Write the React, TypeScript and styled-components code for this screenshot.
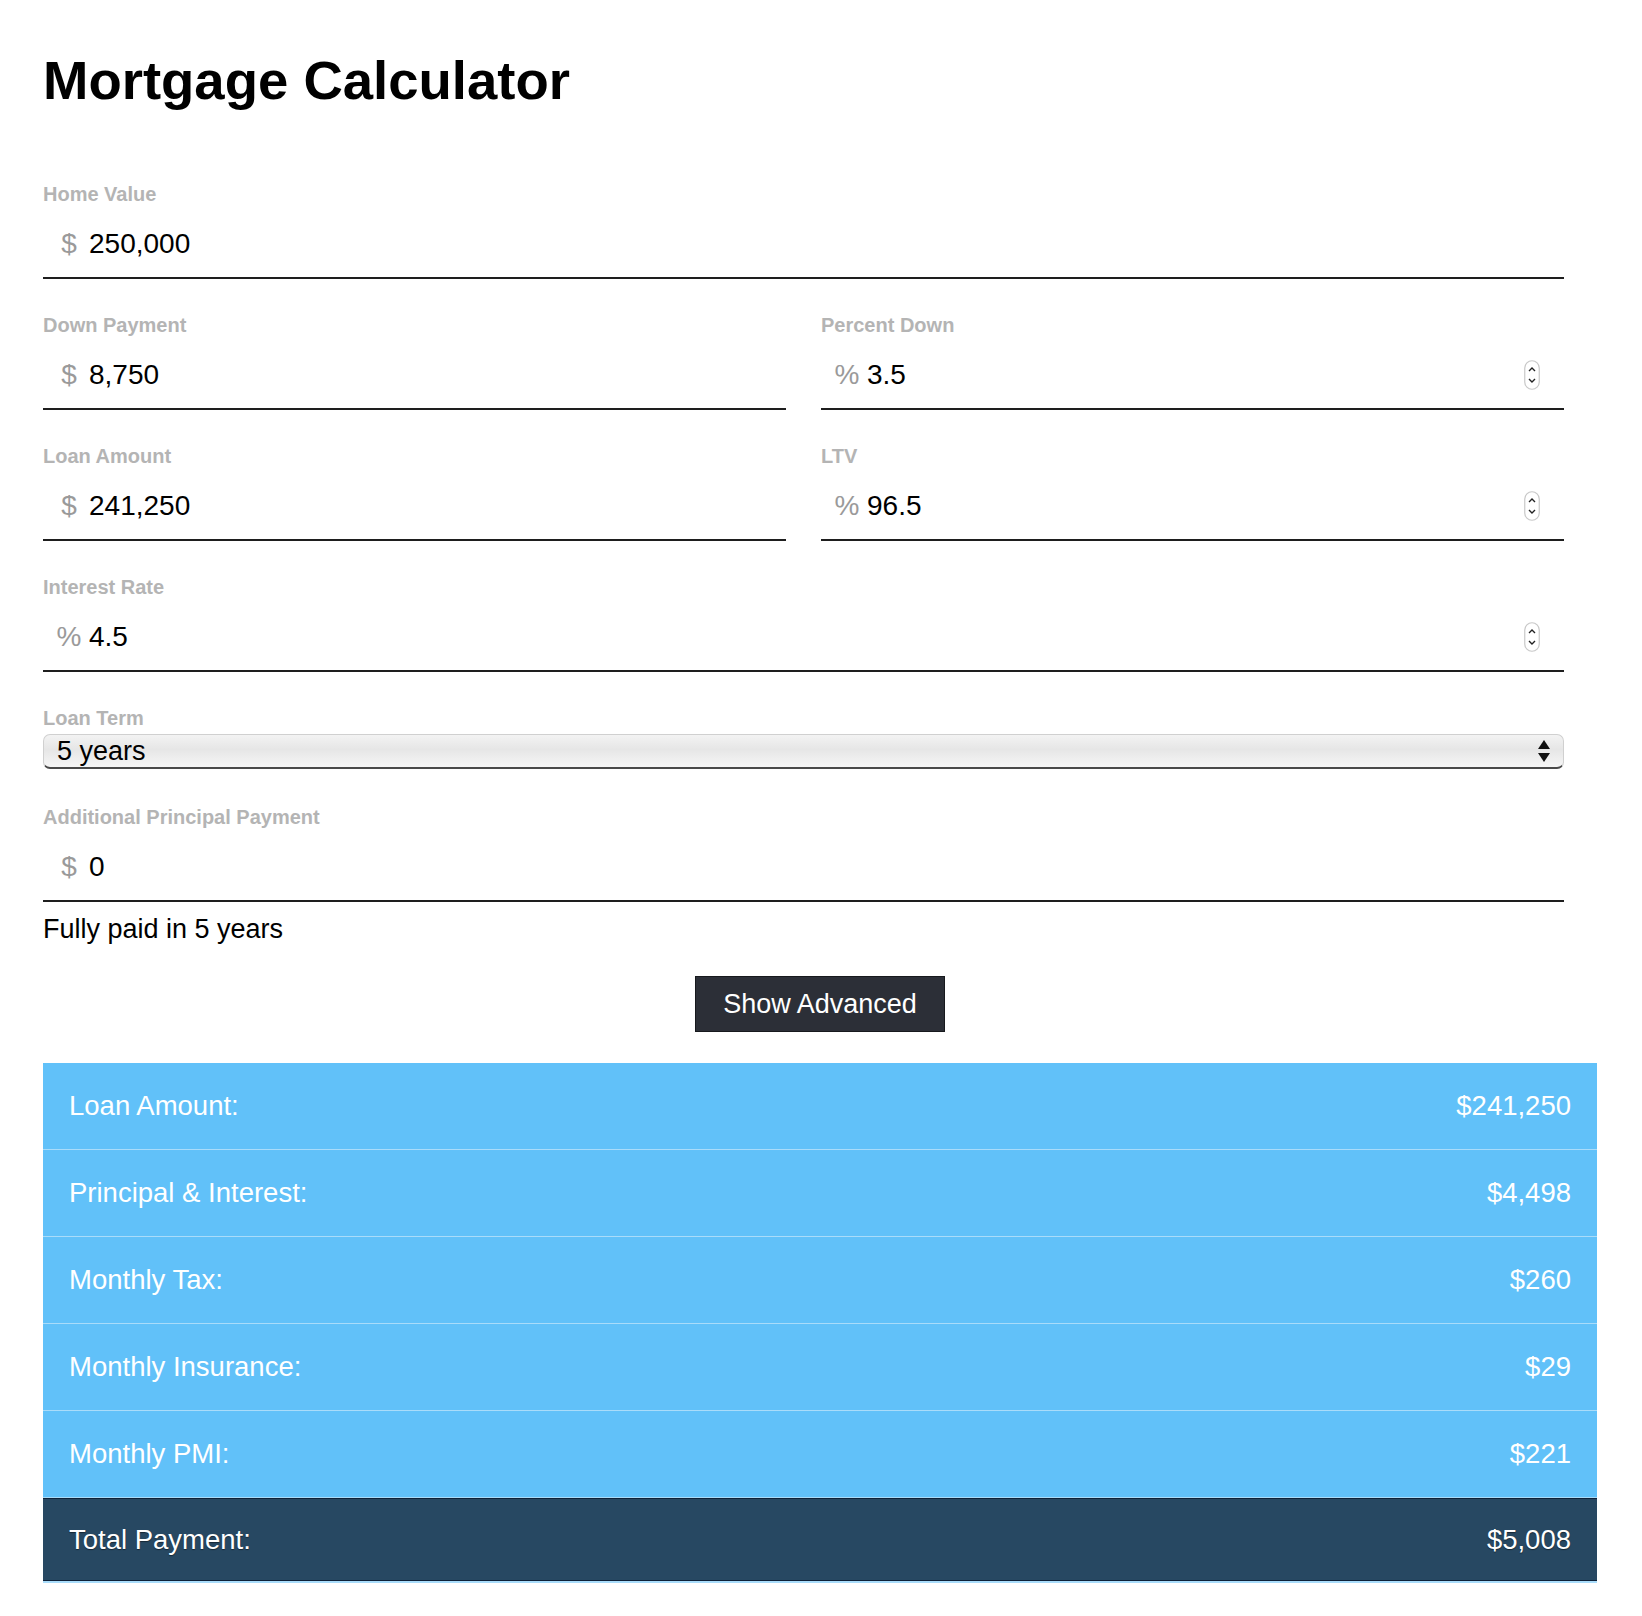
import React from 'react';
import styled, { createGlobalStyle } from 'styled-components';

const GlobalStyle = createGlobalStyle`
  body {
    margin: 0;
    background: #ffffff;
    font-family: "Liberation Sans", Helvetica, Arial, sans-serif;
    color: #000;
  }
`;

const Page = styled.div`
  width: 1554px;
  margin-left: 43px;
  padding-bottom: 30px;
`;

const Title = styled.h1`
  margin: 0;
  padding-top: 50px;
  font-size: 54.5px;
  line-height: 62px;
  font-weight: bold;
`;

const Form = styled.div`
  width: 1521px;
  margin-top: 70px;
`;

const Row = styled.div`
  display: grid;
  grid-template-columns: 1fr 1fr;
  column-gap: 35px;
`;

const Field = styled.div`
  margin-bottom: ${(p: { $gap?: number }) => (p.$gap ?? 34)}px;
`;

const Label = styled.div`
  font-size: 20px;
  line-height: 24px;
  font-weight: bold;
  color: #b4b4b4;
`;

const InputRow = styled.div`
  display: flex;
  align-items: center;
  height: 40px;
  padding: 18px 0 13px;
  border-bottom: 2px solid #1e1e1e;
`;

const Prefix = styled.span`
  width: 46px;
  padding-left: 6px;
  box-sizing: border-box;
  text-align: center;
  font-size: 28px;
  color: #9a9a9a;
`;

const Input = styled.input`
  flex: 1;
  border: none;
  outline: none;
  padding: 0;
  background: transparent;
  font-family: inherit;
  font-size: 28px;
  color: #000;
`;

const Spinner = styled.svg`
  width: 16px;
  height: 30px;
  margin-right: 24px;
  flex-shrink: 0;
`;

const SelectBox = styled.div`
  margin-top: 4px;
  height: 35px;
  box-sizing: border-box;
  display: flex;
  align-items: center;
  justify-content: space-between;
  padding: 0 12px 0 13px;
  border-radius: 7px;
  border: 1px solid #d0d0d0;
  border-bottom: 2px solid #4a4a4a;
  background: linear-gradient(#f3f3f3 0%, #e6e6e6 45%, #f6f6f6 100%);
  font-size: 27px;
`;

const Note = styled.div`
  margin-top: 11px;
  font-size: 27px;
  line-height: 32px;
`;

const ButtonWrap = styled.div`
  display: flex;
  justify-content: center;
  margin-top: 31px;
`;

const Button = styled.button`
  width: 250px;
  height: 56px;
  border: 1px solid #17191d;
  background: #2c2f37;
  color: #fff;
  font-family: inherit;
  font-size: 27px;
  cursor: pointer;
`;

const Table = styled.div`
  margin-top: 31px;
  border-bottom: 2px solid #a9dcfa;
`;

const ResultRow = styled.div<{ $total?: boolean }>`
  display: flex;
  justify-content: space-between;
  align-items: center;
  height: ${(p) => (p.$total ? 81 : 86)}px;
  padding: 0 26px;
  background: ${(p) => (p.$total ? '#274862' : '#61c1f9')};
  border-top: ${(p) => (p.$total ? '1px solid #0e2239' : 'none')};
  border-bottom: 1px solid ${(p) => (p.$total ? '#0e2239' : '#a9dcfa')};
  color: #fff;
  font-size: 27.5px;
  text-shadow: ${(p) => (p.$total ? '0 1px 1px rgba(0,0,0,0.45)' : 'none')};
`;

const SpinIcon = () => (
  <Spinner viewBox="0 0 16 30">
    <rect x="0.75" y="0.75" width="14.5" height="28.5" rx="7.25" fill="#fff" stroke="#c8c8c8" strokeWidth="1.2" />
    <path d="M5 11 L8 8 L11 11" fill="none" stroke="#222" strokeWidth="1.4" />
    <path d="M5 19 L8 22 L11 19" fill="none" stroke="#222" strokeWidth="1.4" />
  </Spinner>
);

const SelectArrows = () => (
  <svg width="14" height="24" viewBox="0 0 14 24">
    <path d="M1 10 L7 1 L13 10 Z" fill="#111" />
    <path d="M1 14 L7 23 L13 14 Z" fill="#111" />
  </svg>
);

type InputFieldProps = {
  label: string;
  prefix: string;
  value: string;
  spin?: boolean;
  gap?: number;
};

const InputField = ({ label, prefix, value, spin, gap }: InputFieldProps) => (
  <Field $gap={gap}>
    <Label>{label}</Label>
    <InputRow>
      <Prefix>{prefix}</Prefix>
      <Input defaultValue={value} />
      {spin && <SpinIcon />}
    </InputRow>
  </Field>
);

const results = [
  { label: 'Loan Amount:', value: '$241,250' },
  { label: 'Principal & Interest:', value: '$4,498' },
  { label: 'Monthly Tax:', value: '$260' },
  { label: 'Monthly Insurance:', value: '$29' },
  { label: 'Monthly PMI:', value: '$221' },
];

const App = () => {
  return (
    <Page>
      <GlobalStyle />
      <Title>Mortgage Calculator</Title>
      <Form>
        <InputField label="Home Value" prefix="$" value="250,000" />
        <Row>
          <InputField label="Down Payment" prefix="$" value="8,750" />
          <InputField label="Percent Down" prefix="%" value="3.5" spin />
        </Row>
        <Row>
          <InputField label="Loan Amount" prefix="$" value="241,250" />
          <InputField label="LTV" prefix="%" value="96.5" spin />
        </Row>
        <InputField label="Interest Rate" prefix="%" value="4.5" spin />
        <Field $gap={36}>
          <Label>Loan Term</Label>
          <SelectBox>
            <span>5 years</span>
            <SelectArrows />
          </SelectBox>
        </Field>
        <InputField label="Additional Principal Payment" prefix="$" value="0" gap={0} />
        <Note>Fully paid in 5 years</Note>
      </Form>
      <ButtonWrap>
        <Button>Show Advanced</Button>
      </ButtonWrap>
      <Table>
        {results.map((r) => (
          <ResultRow key={r.label}>
            <span>{r.label}</span>
            <span>{r.value}</span>
          </ResultRow>
        ))}
        <ResultRow $total>
          <span>Total Payment:</span>
          <span>$5,008</span>
        </ResultRow>
      </Table>
    </Page>
  );
};

export default App;
